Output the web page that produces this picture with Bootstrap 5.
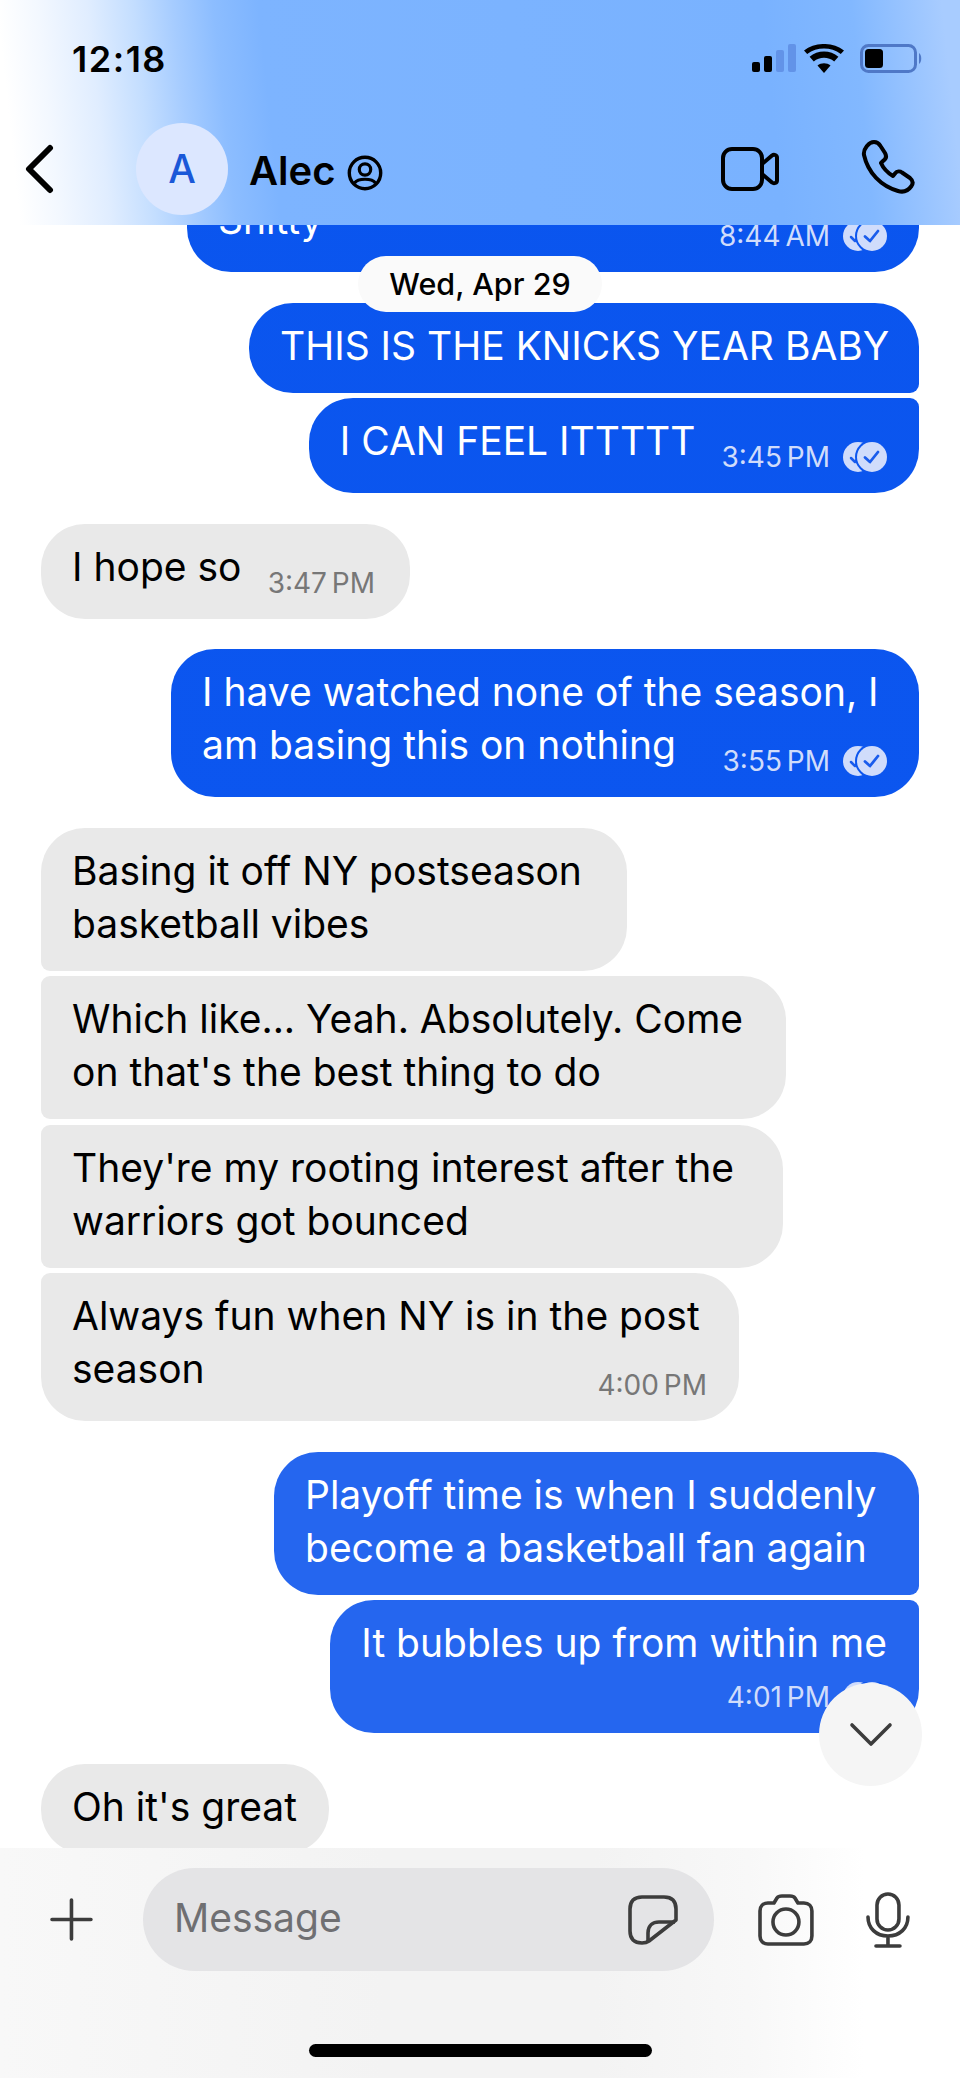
<!DOCTYPE html>
<html lang="en">
<head>
  <meta charset="UTF-8">
  <title>Alec</title>
  <link href="https://cdn.jsdelivr.net/npm/bootstrap@5.3.0/dist/css/bootstrap.min.css" rel="stylesheet">
  <style>
    html, body {
      height: 100%;
      margin: 0;
    }

    body {
      background: #fff;
      font-family: Inter, "Noto Sans", sans-serif;
      color: #000;
    }

    .chat-app {
      width: 960px;
      height: 2078px;
      overflow: hidden;
    }

    /* header */
    .chat-top {
      height: 225px;
      flex-shrink: 0;
      background: linear-gradient(84deg, #fff 20px, #f3f8ff 60px, #e0edff 110px, #c4deff 155px, #a6ccff 195px, #8cbdff 235px, #7db4ff 280px, #79b2ff 780px, #82b8ff 870px, #a8ccff 960px);
      position: relative;
      z-index: 3;
    }

    .status-row {
      height: 123px;
      padding: 36px 37px 0 72px;
    }

    .status-time {
      font-size: 36px;
      font-weight: 600;
      letter-spacing: 1.5px;
      line-height: 46px;
    }

    .nav-row {
      padding-left: 25px;
      padding-right: 45px;
    }

    .avatar-circle {
      width: 92px;
      height: 92px;
      margin-left: 82px;
      margin-right: 21px;
      background: #dce7ff;
      color: #1a58d8;
      font-size: 39px;
      font-weight: 500;
    }

    .contact-name {
      font-size: 40px;
      font-weight: 600;
      line-height: 52px;
      margin-top: 3px;
    }

    .profile-icon {
      margin-left: 11px;
      margin-top: 8px;
    }

    .call-icon {
      margin-left: 82px;
    }

    /* messages */
    .chat-body {
      position: relative;
      padding: 0 41px;
      background: #fff;
      min-height: 0;
    }

    .bubble {
      padding: 16px 32px 21px 31px;
      font-size: 39px;
      line-height: 53px;
      white-space: nowrap;
      border-radius: 44px;
    }

    .bubble-out {
      align-self: flex-end;
      color: #fff;
      background: linear-gradient(180deg, #0a55ee 0, #0c56ef 900px, #2566ef 1300px);
      background-attachment: fixed;
    }

    .bubble-in {
      align-self: flex-start;
      background: #e9e9e9;
    }

    .first-bubble {
      width: 732px;
      margin-top: -48px;
    }

    .width-watched { width: 748px; }
    .width-basing { width: 586px; }
    .width-which { width: 745px; }
    .width-rooting { width: 742px; }
    .width-always { width: 698px; }
    .width-playoff { width: 645px; }
    .width-knicks { width: 670px; }
    .width-hope { width: 369px; padding-right: 35px; }

    .gap-group {
      margin-top: 5.5px;
    }

    .gap-turn {
      margin-top: 30.5px;
    }

    .bubble-out.join-next { border-bottom-right-radius: 9px; }
    .bubble-out.join-prev { border-top-right-radius: 9px; }
    .bubble-in.join-next { border-bottom-left-radius: 9px; }
    .bubble-in.join-prev { border-top-left-radius: 9px; }

    .meta-row {
      height: 58px;
      gap: 26px;
    }

    .meta-only {
      height: 43px;
    }

    .msg-meta {
      font-size: 28px;
      word-spacing: -3px;
      line-height: 36px;
      white-space: nowrap;
      margin-bottom: -3px;
    }

    .bubble-out .msg-meta {
      color: #d0dcfb;
    }

    .bubble-in .msg-meta {
      color: #777;
    }

    .tick-mark {
      margin-left: 13px;
      vertical-align: -5px;
    }

    .date-pill {
      position: absolute;
      left: 358px;
      top: 31px;
      width: 244px;
      height: 56px;
      background: #fafafa;
      font-size: 30.5px;
      font-weight: 500;
      z-index: 2;
    }

    .scroll-down {
      position: absolute;
      left: 819px;
      top: 1458px;
      width: 103px;
      height: 103px;
      background: #f5f5f5;
      z-index: 2;
    }

    /* footer */
    .chat-bottom {
      height: 230px;
      flex-shrink: 0;
      background: linear-gradient(90deg, #f8f8f8 0, #f3f3f3 40%, #f3f3f3 62%, #f8f8f8 78%, #fff 90%);
      position: relative;
      z-index: 3;
    }

    .input-row {
      padding: 20px 50px 0 50px;
    }

    .message-pill {
      width: 572px;
      height: 103px;
      margin-left: 50px;
      margin-right: 44px;
      padding: 0 36px 0 31px;
      background: #e4e4e6;
      color: #6f6f72;
      font-size: 39px;
    }

    .message-hint {
      margin-top: -3px;
    }

    .mic-icon {
      margin-left: 52px;
    }

    .home-bar {
      width: 343px;
      height: 13px;
      margin: 73px auto 0;
      background: #000;
    }
  </style>
</head>
<body>
<div class="chat-app d-flex flex-column">

  <!-- Header -->
  <div class="chat-top">
    <div class="status-row d-flex justify-content-between">
      <div class="status-time">12:18</div>
      <div class="d-flex align-items-start">
        <svg width="44" height="28" viewBox="0 0 44 28" class="mt-2">
          <rect x="0" y="18" width="8" height="10" rx="2" fill="#000"/>
          <rect x="12" y="12" width="8" height="16" rx="2" fill="#000"/>
          <rect x="24" y="6" width="8" height="22" rx="2" fill="#6293e8"/>
          <rect x="36" y="0" width="8" height="28" rx="2" fill="#6293e8"/>
        </svg>
        <svg width="40" height="29" viewBox="0 0 40 29" class="mt-2 ms-2">
          <path d="M20 29 L13.5 21.6 C17 18.4 23 18.4 26.5 21.6 Z" fill="#000"/>
          <path d="M9.8 17.4 L5.6 12.8 C13.5 5.6 26.5 5.6 34.4 12.8 L30.2 17.4 C24.5 12.4 15.5 12.4 9.8 17.4 Z" fill="#000"/>
          <path d="M3.2 10 L0 6.5 C11 -2.2 29 -2.2 40 6.5 L36.8 10 C27 2.8 13 2.8 3.2 10 Z" fill="#000"/>
        </svg>
        <svg width="63" height="30" viewBox="0 0 63 30" class="mt-2 ms-3">
          <rect x="1.5" y="1.5" width="54" height="26" rx="7" fill="none" stroke="#4f78c7" stroke-width="3"/>
          <rect x="5" y="5" width="18" height="19" rx="3.5" fill="#000"/>
          <path d="M59 9 C62 11 62 18 59 20 Z" fill="#4f78c7"/>
        </svg>
      </div>
    </div>
    <div class="nav-row d-flex align-items-center">
      <svg width="29" height="50" viewBox="0 0 29 50">
        <path d="M25 4 L4 25 L25 46" fill="none" stroke="#000" stroke-width="6" stroke-linecap="round" stroke-linejoin="round"/>
      </svg>
      <div class="avatar-circle rounded-circle d-flex align-items-center justify-content-center">A</div>
      <div class="contact-name">Alec</div>
      <svg width="36" height="36" viewBox="0 0 36 36" class="profile-icon">
        <circle cx="18" cy="18" r="15.7" fill="none" stroke="#000" stroke-width="3.4"/>
        <circle cx="18" cy="14.5" r="5.7" fill="none" stroke="#000" stroke-width="3.2"/>
        <path d="M7.5 28 C11 23 25 23 28.5 28" fill="none" stroke="#000" stroke-width="3.2"/>
      </svg>
      <svg width="58" height="44" viewBox="0 0 58 44" class="ms-auto">
        <rect x="2" y="2" width="39" height="40" rx="9" fill="none" stroke="#000" stroke-width="4"/>
        <path d="M41 17 L51 8.5 C53 7 56 8 56 10.5 L56 33.5 C56 36 53 37 51 35.5 L41 27" fill="none" stroke="#000" stroke-width="4" stroke-linejoin="round"/>
      </svg>
      <svg width="54" height="54" viewBox="0 0 54 54" class="call-icon mb-1">
        <path d="M3 15 C2 9 8 2 13 2 C16 2 18 3.500 19.500 6 L24 13 C26 16.500 25 19 22 21 L20 23 C23 30 27 33 32 36 L34 33.500 C36 31 39 31 41 32.500 L49 38 C52 40.500 52.500 43 50.500 46 C47 51 42 52.500 37 51 C20 46 7 33 3 15 Z" fill="none" stroke="#000" stroke-width="4" stroke-linejoin="round"/>
      </svg>
    </div>
  </div>

  <!-- Messages -->
  <div class="chat-body flex-grow-1 d-flex flex-column">
    <div class="date-pill rounded-pill d-flex align-items-center justify-content-center">Wed, Apr 29</div>

    <div class="bubble bubble-out first-bubble">
      <div class="meta-row d-flex justify-content-between">
        <span>Shitty</span>
        <span class="msg-meta align-self-end">8:44 AM<svg class="tick-mark" width="44" height="30" viewBox="0 0 44 30"><use href="#ticks"/></svg></span>
      </div>
    </div>

    <div class="bubble bubble-out width-knicks join-next gap-turn">THIS IS THE KNICKS YEAR BABY</div>
    <div class="bubble bubble-out join-prev gap-group">
      <div class="meta-row d-flex justify-content-between">
        <span>I CAN FEEL ITTTTT</span>
        <span class="msg-meta align-self-end">3:45 PM<svg class="tick-mark" width="44" height="30" viewBox="0 0 44 30"><use href="#ticks"/></svg></span>
      </div>
    </div>

    <div class="bubble bubble-in width-hope gap-turn">
      <div class="meta-row d-flex justify-content-between">
        <span>I hope so</span>
        <span class="msg-meta align-self-end">3:47 PM</span>
      </div>
    </div>

    <div class="bubble bubble-out width-watched gap-turn">
      <div>I have watched none of the season, I</div>
      <div class="meta-row d-flex justify-content-between">
        <span>am basing this on nothing</span>
        <span class="msg-meta align-self-end">3:55 PM<svg class="tick-mark" width="44" height="30" viewBox="0 0 44 30"><use href="#ticks"/></svg></span>
      </div>
    </div>

    <div class="bubble bubble-in width-basing join-next gap-turn">Basing it off NY postseason<br>basketball vibes</div>
    <div class="bubble bubble-in width-which join-next join-prev gap-group">Which like... Yeah. Absolutely. Come<br>on that's the best thing to do</div>
    <div class="bubble bubble-in width-rooting join-next join-prev gap-group">They're my rooting interest after the<br>warriors got bounced</div>
    <div class="bubble bubble-in width-always join-prev gap-group">
      <div>Always fun when NY is in the post</div>
      <div class="meta-row d-flex justify-content-between">
        <span>season</span>
        <span class="msg-meta align-self-end">4:00 PM</span>
      </div>
    </div>

    <div class="bubble bubble-out width-playoff join-next gap-turn">Playoff time is when I suddenly<br>become a basketball fan again</div>
    <div class="bubble bubble-out join-prev gap-group">
      <div>It bubbles up from within me</div>
      <div class="meta-only d-flex justify-content-end">
        <span class="msg-meta align-self-end">4:01 PM<svg class="tick-mark" width="44" height="30" viewBox="0 0 44 30"><use href="#ticks"/></svg></span>
      </div>
    </div>

    <div class="bubble bubble-in gap-turn">Oh it's great</div>

    <div class="scroll-down rounded-circle d-flex align-items-center justify-content-center">
      <svg width="44" height="26" viewBox="0 0 44 26">
        <path d="M3 3 L22 22 L41 3" fill="none" stroke="#3c3c3c" stroke-width="3.6" stroke-linecap="round" stroke-linejoin="round"/>
      </svg>
    </div>
  </div>

  <!-- Footer -->
  <div class="chat-bottom">
    <div class="input-row d-flex align-items-center">
      <svg width="43" height="43" viewBox="0 0 43 43">
        <path d="M21.500 2 V41 M2 21.500 H41" fill="none" stroke="#3c3c3c" stroke-width="3.6" stroke-linecap="round"/>
      </svg>
      <div class="message-pill rounded-pill d-flex align-items-center justify-content-between">
        <span class="message-hint">Message</span>
        <svg width="50" height="50" viewBox="0 0 50 50">
          <path d="M14 48 C6 48 2 44 2 36 V14 C2 6 6 2 14 2 H36 C44 2 48 6 48 14 V25 L21 46 C19 47.500 17 48 14 48 Z" fill="none" stroke="#3c3c3c" stroke-width="3.6" stroke-linejoin="round"/>
          <path d="M20 46 V38 C20 30 25 27 31 27 H47" fill="none" stroke="#3c3c3c" stroke-width="3.6"/>
        </svg>
      </div>
      <svg width="56" height="52" viewBox="0 0 56 52">
        <path d="M10 9 H16 L19 4 C20 2.500 22 2 24 2 H32 C34 2 36 2.500 37 4 L40 9 H46 C51 9 54 12 54 17 V42 C54 47 51 50 46 50 H10 C5 50 2 47 2 42 V17 C2 12 5 9 10 9 Z" fill="none" stroke="#3c3c3c" stroke-width="3.6" stroke-linejoin="round"/>
        <circle cx="28" cy="28" r="13" fill="none" stroke="#3c3c3c" stroke-width="3.6"/>
      </svg>
      <svg width="44" height="56" viewBox="0 0 44 56" class="mic-icon">
        <rect x="11" y="2" width="22" height="36" rx="11" fill="none" stroke="#3c3c3c" stroke-width="3.6"/>
        <path d="M2 25 C2 36 10 44 22 44 C34 44 42 36 42 25 M22 44 V54 M10 54 H34" fill="none" stroke="#3c3c3c" stroke-width="3.6" stroke-linecap="round"/>
      </svg>
    </div>
    <div class="home-bar rounded-pill"></div>
  </div>
</div>

<svg width="0" height="0" class="d-none">
  <defs>
    <g id="ticks">
      <circle cx="15" cy="15" r="15" fill="#d0dcfb"/>
      <path d="M8 16 L12 20 L20 10" fill="none" stroke="#1a5cec" stroke-width="2.500" stroke-linecap="round" stroke-linejoin="round"/>
      <circle cx="29" cy="15" r="17" fill="#0c56ef"/>
      <circle cx="29" cy="15" r="15" fill="#d0dcfb"/>
      <path d="M22 15.500 L27 20 L35 10" fill="none" stroke="#1a5cec" stroke-width="2.800" stroke-linecap="round" stroke-linejoin="round"/>
    </g>
  </defs>
</svg>
</body>
</html>
